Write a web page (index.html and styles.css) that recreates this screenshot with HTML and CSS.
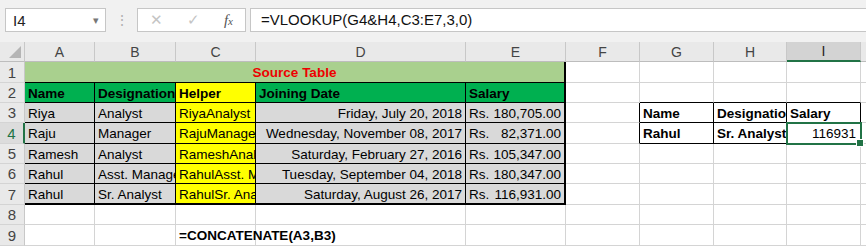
FILE: index.html
```html
<!DOCTYPE html>
<html lang="en">
<head>
  <meta charset="UTF-8">
  <title>VLOOKUP with helper column</title>
  <meta name="viewport" content="width=device-width, initial-scale=1">
  <link rel="stylesheet" href="styles.css">
</head>
<body>

  <div class="formula-bar">
    <div class="name-box">
      <span>I4</span>
      <span class="drop">&#9662;</span>
    </div>
    <div class="grip">&#8942;</div>
    <div class="fx-buttons">
      <span class="fx-btn">&#10005;</span>
      <span class="fx-btn">&#10003;</span>
      <span class="fx-btn fx"><i>f</i><i class="x">x</i></span>
    </div>
    <div class="formula">=VLOOKUP(G4&amp;H4,C3:E7,3,0)</div>
  </div>

  <div class="sheet">
    <!-- column headers -->
    <div class="corner"><span class="tri"></span></div>
    <div class="col-h">A</div>
    <div class="col-h">B</div>
    <div class="col-h">C</div>
    <div class="col-h">D</div>
    <div class="col-h">E</div>
    <div class="col-h">F</div>
    <div class="col-h">G</div>
    <div class="col-h">H</div>
    <div class="col-h active">I</div>
    <div class="col-h rest"></div>

    <!-- row 1 -->
    <div class="row-h">1</div>
    <div class="cell title span5">Source Table</div>
    <div class="cell"></div>
    <div class="cell"></div>
    <div class="cell"></div>
    <div class="cell"></div>
    <div class="cell rest"></div>

    <!-- row 2 -->
    <div class="row-h">2</div>
    <div class="cell t head">Name</div>
    <div class="cell t head">Designation</div>
    <div class="cell t helper b">Helper</div>
    <div class="cell t head">Joining Date</div>
    <div class="cell t head last">Salary</div>
    <div class="cell"></div>
    <div class="cell bb"></div>
    <div class="cell bb"></div>
    <div class="cell bb"></div>
    <div class="cell rest"></div>

    <!-- row 3 -->
    <div class="row-h">3</div>
    <div class="cell t data">Riya</div>
    <div class="cell t data">Analyst</div>
    <div class="cell t helper">RiyaAnalyst</div>
    <div class="cell t data num">Friday, July 20, 2018</div>
    <div class="cell t data last money"><span>Rs.</span><span>180,705.00</span></div>
    <div class="cell br"></div>
    <div class="cell t b">Name</div>
    <div class="cell t b">Designation</div>
    <div class="cell t b">Salary</div>
    <div class="cell rest"></div>

    <!-- row 4 -->
    <div class="row-h sel">4</div>
    <div class="cell t data">Raju</div>
    <div class="cell t data">Manager</div>
    <div class="cell t helper">RajuManager</div>
    <div class="cell t data num">Wednesday, November 08, 2017</div>
    <div class="cell t data last money"><span>Rs.</span><span>82,371.00</span></div>
    <div class="cell br"></div>
    <div class="cell t b">Rahul</div>
    <div class="cell t b">Sr. Analyst</div>
    <div class="cell t num current">116931</div>
    <div class="cell rest"></div>

    <!-- row 5 -->
    <div class="row-h">5</div>
    <div class="cell t data">Ramesh</div>
    <div class="cell t data">Analyst</div>
    <div class="cell t helper">RameshAnalyst</div>
    <div class="cell t data num">Saturday, February 27, 2016</div>
    <div class="cell t data last money"><span>Rs.</span><span>105,347.00</span></div>
    <div class="cell"></div>
    <div class="cell"></div>
    <div class="cell"></div>
    <div class="cell"></div>
    <div class="cell rest"></div>

    <!-- row 6 -->
    <div class="row-h">6</div>
    <div class="cell t data">Rahul</div>
    <div class="cell t data">Asst. Manager</div>
    <div class="cell t helper">RahulAsst. Manager</div>
    <div class="cell t data num">Tuesday, September 04, 2018</div>
    <div class="cell t data last money"><span>Rs.</span><span>180,347.00</span></div>
    <div class="cell"></div>
    <div class="cell"></div>
    <div class="cell"></div>
    <div class="cell"></div>
    <div class="cell rest"></div>

    <!-- row 7 -->
    <div class="row-h">7</div>
    <div class="cell t data bottom">Rahul</div>
    <div class="cell t data bottom">Sr. Analyst</div>
    <div class="cell t helper bottom">RahulSr. Analyst</div>
    <div class="cell t data num bottom">Saturday, August 26, 2017</div>
    <div class="cell t data last money bottom"><span>Rs.</span><span>116,931.00</span></div>
    <div class="cell"></div>
    <div class="cell"></div>
    <div class="cell"></div>
    <div class="cell"></div>
    <div class="cell rest"></div>

    <!-- row 8 -->
    <div class="row-h">8</div>
    <div class="cell"></div>
    <div class="cell"></div>
    <div class="cell"></div>
    <div class="cell"></div>
    <div class="cell"></div>
    <div class="cell"></div>
    <div class="cell"></div>
    <div class="cell"></div>
    <div class="cell"></div>
    <div class="cell rest"></div>

    <!-- row 9 -->
    <div class="row-h">9</div>
    <div class="cell"></div>
    <div class="cell"></div>
    <div class="cell b overflow">=CONCATENATE(A3,B3)</div>
    <div class="cell"></div>
    <div class="cell"></div>
    <div class="cell"></div>
    <div class="cell"></div>
    <div class="cell"></div>
    <div class="cell"></div>
    <div class="cell rest"></div>
  </div>

</body>
</html>
```

FILE: styles.css
```css
* {
  box-sizing: border-box;
}

body {
  margin: 0;
  width: 866px;
  height: 247px;
  overflow: hidden;
  background: #fff;
  font-family: "Liberation Sans", Arial, sans-serif;
  color: #000;
}

/* formula bar */
.formula-bar {
  height: 42px;
  background: #f1f1f1;
  display: flex;
  align-items: flex-start;
  padding: 8px 0 0 5px;
}

.name-box {
  width: 101px;
  height: 24px;
  background: #fff;
  border: 1px solid #c6c6c6;
  display: flex;
  align-items: center;
  justify-content: space-between;
  padding: 0 6px 0 7px;
  font-size: 15px;
  color: #222;
}

.name-box .drop {
  font-size: 11px;
  color: #777;
}

.grip {
  width: 31px;
  height: 24px;
  text-align: center;
  line-height: 24px;
  color: #b0b0b0;
  font-size: 14px;
}

.fx-buttons {
  width: 109px;
  height: 24px;
  background: #fff;
  border: 1px solid #c6c6c6;
  display: flex;
  align-items: center;
  justify-content: space-between;
  padding: 0 12px 0 12px;
}

.fx-btn {
  color: #c4c4c4;
  font-size: 15px;
}

.fx {
  color: #555;
  font-family: "Liberation Serif", serif;
  font-size: 15px;
}

.fx .x {
  font-size: 11px;
}

.formula {
  flex: 1;
  height: 24px;
  margin-left: 4px;
  background: #fff;
  border: 1px solid #c6c6c6;
  border-right: none;
  padding-left: 10px;
  line-height: 22px;
  font-size: 15px;
  color: #111;
}

/* grid */
.sheet {
  display: grid;
  grid-template-columns: 25px 70px 81px 80px 210px 100px 74px 74px 73px 74px 5px;
  grid-template-rows: 20px 21px 20px 20px 21px 20px 20px 21px 20px 21px;
  font-size: 13.5px;
}

.corner,
.col-h,
.row-h {
  background: #e9e9e9;
  color: #444;
  border-right: 1px solid #c8c8c8;
  border-bottom: 1px solid #bdbdbd;
  display: flex;
  align-items: center;
  justify-content: center;
}

.col-h {
  font-size: 14px;
}

.col-h.active {
  background: #d3d3d3;
  color: #222;
  border-bottom: 2px solid #217346;
}

.col-h.rest {
  border-right: none;
}

.corner {
  position: relative;
}

.corner .tri {
  position: absolute;
  right: 3px;
  bottom: 3px;
  width: 0;
  height: 0;
  border-left: 12px solid transparent;
  border-bottom: 12px solid #b5b5b5;
}

.row-h {
  font-size: 15px;
  border-bottom-color: #d4d4d4;
}

.row-h.sel {
  background: #dcdcdc;
  color: #217346;
  border-right: 2px solid #217346;
}

.cell {
  border-right: 1px solid #d4d4d4;
  border-bottom: 1px solid #d4d4d4;
  padding: 1px 3px 0;
  white-space: nowrap;
  overflow: hidden;
  display: flex;
  align-items: center;
}

.cell.rest {
  border-right: none;
}

.span5 {
  grid-column: span 5;
}

.title {
  background: #a9d08e;
  color: #ee0000;
  font-weight: bold;
  justify-content: center;
  border-right: 2px solid #000;
  border-bottom: 1px solid #000;
}

.t {
  border-right-color: #000;
  border-bottom-color: #000;
}

.head {
  background: #00b050;
  font-weight: bold;
}

.helper {
  background: #ffff00;
}

.data {
  background: #d9d9d9;
}

.b {
  font-weight: bold;
}

.num {
  justify-content: flex-end;
}

.money {
  justify-content: space-between;
}

.last {
  border-right-width: 2px;
}

.bottom {
  border-bottom-width: 2px;
}

.br {
  border-right-color: #000;
}

.bb {
  border-bottom-color: #000;
}

.overflow {
  overflow: visible;
  position: relative;
  z-index: 1;
}

.current {
  position: relative;
  overflow: visible;
  outline: 2px solid #217346;
  outline-offset: -1px;
  padding-right: 4px;
}

.current::after {
  content: "";
  position: absolute;
  right: -4px;
  bottom: -4px;
  width: 6px;
  height: 6px;
  background: #217346;
  border: 1px solid #fff;
}
```
